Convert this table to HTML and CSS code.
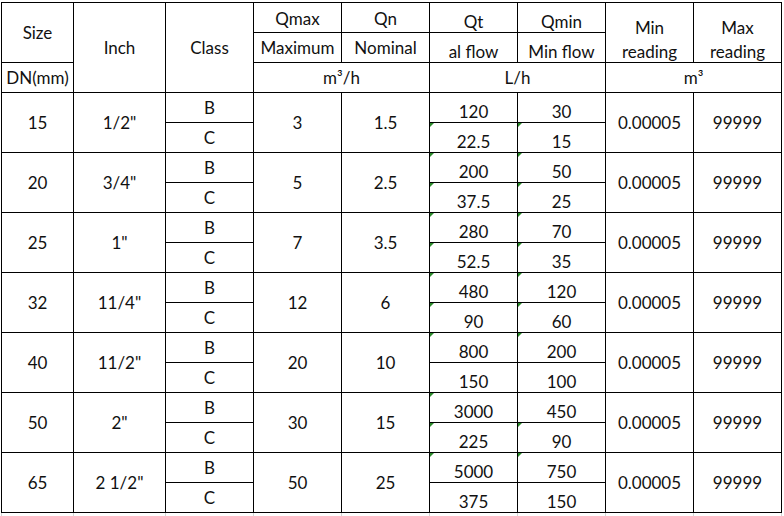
FILE: index.html
```html
<!DOCTYPE html>
<html>
<head>
<meta charset="utf-8">
<link rel="stylesheet" href="styles.css">
</head>
<body>
<div class="sheet">
  <div class="c r2">Size</div>
  <div class="c r3">Inch</div>
  <div class="c r3">Class</div>
  <div class="c h1">Qmax</div>
  <div class="c h1">Qn</div>
  <div class="c hq">Qt</div>
  <div class="c hq">Qmin</div>
  <div class="c r2 two">Min<br>reading</div>
  <div class="c r2 two">Max<br>reading</div>
  <div class="c">Maximum</div>
  <div class="c">Nominal</div>
  <div class="c hq">al flow</div>
  <div class="c hq">Min flow</div>
  <div class="c">DN(mm)</div>
  <div class="c s2">m³/h</div>
  <div class="c s2">L/h</div>
  <div class="c s2">m³</div>

  <div class="c r2">15</div><div class="c r2">1/2"</div><div class="c">B</div><div class="c r2">3</div><div class="c r2">1.5</div><div class="c q">120</div><div class="c q">30</div><div class="c r2">0.00005</div><div class="c r2">99999</div>
  <div class="c">C</div><div class="c q t">22.5</div><div class="c q t">15</div>

  <div class="c r2">20</div><div class="c r2">3/4"</div><div class="c">B</div><div class="c r2">5</div><div class="c r2">2.5</div><div class="c q t">200</div><div class="c q t">50</div><div class="c r2">0.00005</div><div class="c r2">99999</div>
  <div class="c">C</div><div class="c q t">37.5</div><div class="c q t">25</div>

  <div class="c r2">25</div><div class="c r2">1"</div><div class="c">B</div><div class="c r2">7</div><div class="c r2">3.5</div><div class="c q t">280</div><div class="c q t">70</div><div class="c r2">0.00005</div><div class="c r2">99999</div>
  <div class="c">C</div><div class="c q t">52.5</div><div class="c q t">35</div>

  <div class="c r2">32</div><div class="c r2">11/4"</div><div class="c">B</div><div class="c r2">12</div><div class="c r2">6</div><div class="c q t">480</div><div class="c q t">120</div><div class="c r2">0.00005</div><div class="c r2">99999</div>
  <div class="c">C</div><div class="c q t">90</div><div class="c q t">60</div>

  <div class="c r2">40</div><div class="c r2">11/2"</div><div class="c">B</div><div class="c r2">20</div><div class="c r2">10</div><div class="c q t">800</div><div class="c q t">200</div><div class="c r2">0.00005</div><div class="c r2">99999</div>
  <div class="c">C</div><div class="c q">150</div><div class="c q">100</div>

  <div class="c r2">50</div><div class="c r2">2"</div><div class="c">B</div><div class="c r2">30</div><div class="c r2">15</div><div class="c q t">3000</div><div class="c q">450</div><div class="c r2">0.00005</div><div class="c r2">99999</div>
  <div class="c">C</div><div class="c q t">225</div><div class="c q t">90</div>

  <div class="c r2">65</div><div class="c r2">2 1/2"</div><div class="c">B</div><div class="c r2">50</div><div class="c r2">25</div><div class="c q t">5000</div><div class="c q t">750</div><div class="c r2">0.00005</div><div class="c r2">99999</div>
  <div class="c">C</div><div class="c q">375</div><div class="c q">150</div>
</div>
<div class="under">
  <div></div><div></div><div></div><div></div><div></div><div></div><div></div><div></div><div></div>
</div>
</body>
</html>
```

FILE: styles.css
```css
html, body {
  margin: 0;
  padding: 0;
  background: #fff;
}
body {
  padding: 2px 0 0 1px;
  font-family: Lato, "Noto Sans", sans-serif;
  font-size: 17px;
  color: #111;
}
.sheet {
  display: grid;
  grid-template-columns: 71px 91px repeat(7, 87px);
  grid-auto-rows: 29px;
  gap: 1px;
  padding: 1px;
  background: #000;
  width: max-content;
}
.c {
  background: #fff;
  display: flex;
  align-items: center;
  justify-content: center;
  text-align: center;
  position: relative;
  white-space: nowrap;
  line-height: 20px;
}
.r2 { grid-row: span 2; }
.r3 { grid-row: span 3; }
.s2 { grid-column: span 2; }
.h1 { padding-top: 3px; }
.hq { padding-top: 8px; }
.q { padding-top: 8px; }
.two {
  line-height: 24px;
  padding-top: 14px;
}
.t::before {
  content: "";
  position: absolute;
  top: 0;
  left: 0;
  border-top: 4px solid #2a8a2a;
  border-right: 4px solid transparent;
}
.under {
  display: grid;
  grid-template-columns: 71px 91px repeat(7, 87px);
  gap: 1px;
  padding: 0 1px;
  background: #d4d4d4;
  width: max-content;
  height: 4px;
}
.under div { background: #fff; }
```
